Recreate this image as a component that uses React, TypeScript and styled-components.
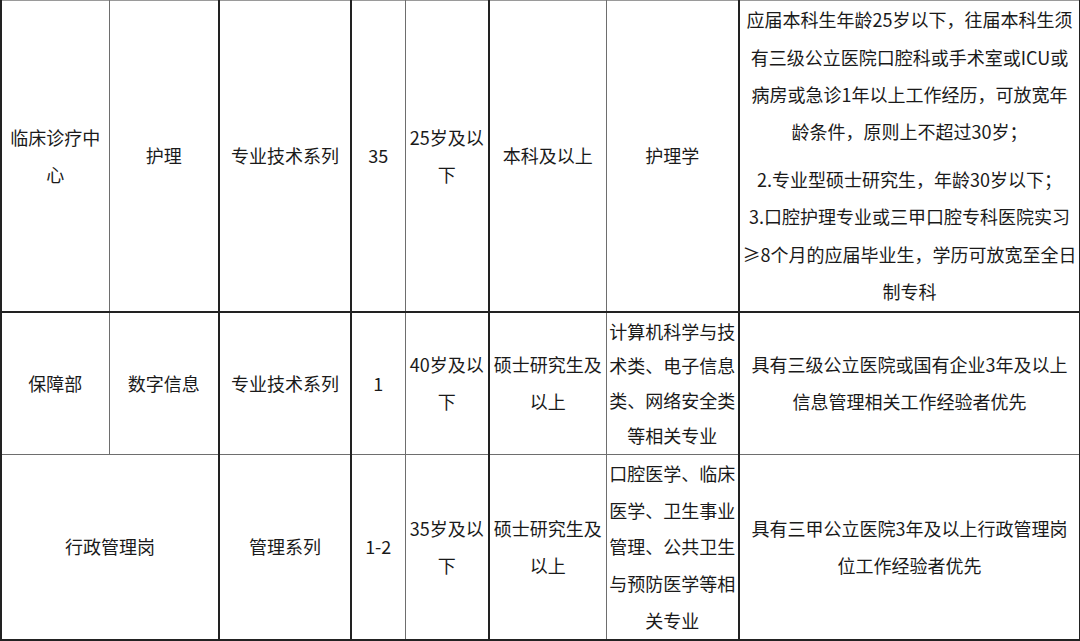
import React from 'react';
import styled, { createGlobalStyle } from 'styled-components';

const GlobalStyle = createGlobalStyle`
  html, body {
    margin: 0;
    padding: 0;
    background: #fff;
  }
  body {
    font-family: "Noto Sans CJK SC", "Noto Sans", sans-serif;
    color: #1a1a1a;
  }
`;

type Line = 'dark' | 'light';

const lineCss = (l?: Line) =>
  l === 'light' ? '1px solid #6e6e6e' : '2px solid #222';

const Table = styled.table`
  border-collapse: collapse;
  table-layout: fixed;
  width: 1079px;
  border-top: 1px solid #9a9a9a;
  border-left: 2px solid #222;
  font-size: 18px;
`;

const Row = styled.tr<{ $h: number; $b?: Line }>`
  height: ${(p) => p.$h}px;
  & > td {
    border-bottom: ${(p) => lineCss(p.$b)};
  }
`;

const Cell = styled.td<{ $r?: Line; $lh?: number }>`
  border-right: ${(p) => lineCss(p.$r)};
  padding: 0 2px;
  text-align: center;
  vertical-align: middle;
  line-height: ${(p) => p.$lh ?? 36.8}px;
  white-space: nowrap;
  overflow: hidden;
`;

const Para = styled.div<{ $gap?: number }>`
  margin-bottom: ${(p) => p.$gap ?? 0}px;
`;

const Lines = ({ items }: { items: string[] }) => (
  <>
    {items.map((t, i) => (
      <div key={i}>{t}</div>
    ))}
  </>
);

const widths = [108, 110, 132, 54, 84, 117, 133, 341];

export default function App() {
  return (
    <>
      <GlobalStyle />
      <Table>
        <colgroup>
          {widths.map((w, i) => (
            <col key={i} style={{ width: w }} />
          ))}
        </colgroup>
        <tbody>
          <Row $h={311} $b="dark">
            <Cell $r="light">
              <Lines items={['临床诊疗中', '心']} />
            </Cell>
            <Cell $r="dark">护理</Cell>
            <Cell $r="dark">专业技术系列</Cell>
            <Cell $r="light">35</Cell>
            <Cell $r="dark">
              <Lines items={['25岁及以', '下']} />
            </Cell>
            <Cell $r="light">本科及以上</Cell>
            <Cell $r="dark">护理学</Cell>
            <Cell $r="dark" $lh={37.4}>
              <Para $gap={10}>
                <Lines
                  items={[
                    '应届本科生年龄25岁以下，往届本科生须',
                    '有三级公立医院口腔科或手术室或ICU或',
                    '病房或急诊1年以上工作经历，可放宽年',
                    '龄条件，原则上不超过30岁；',
                  ]}
                />
              </Para>
              <Para>2.专业型硕士研究生，年龄30岁以下；</Para>
              <Para>
                <Lines
                  items={[
                    '3.口腔护理专业或三甲口腔专科医院实习',
                    '≥8个月的应届毕业生，学历可放宽至全日',
                    '制专科',
                  ]}
                />
              </Para>
            </Cell>
          </Row>
          <Row $h={143} $b="light">
            <Cell $r="light">保障部</Cell>
            <Cell $r="dark">数字信息</Cell>
            <Cell $r="dark">专业技术系列</Cell>
            <Cell $r="light">1</Cell>
            <Cell $r="dark">
              <Lines items={['40岁及以', '下']} />
            </Cell>
            <Cell $r="light">
              <Lines items={['硕士研究生及', '以上']} />
            </Cell>
            <Cell $r="dark" $lh={34.8}>
              <Lines items={['计算机科学与技', '术类、电子信息', '类、网络安全类', '等相关专业']} />
            </Cell>
            <Cell $r="dark">
              <Lines items={['具有三级公立医院或国有企业3年及以上', '信息管理相关工作经验者优先']} />
            </Cell>
          </Row>
          <Row $h={185} $b="dark">
            <Cell colSpan={2} $r="dark">
              行政管理岗
            </Cell>
            <Cell $r="dark">管理系列</Cell>
            <Cell $r="light">1-2</Cell>
            <Cell $r="dark">
              <Lines items={['35岁及以', '下']} />
            </Cell>
            <Cell $r="light">
              <Lines items={['硕士研究生及', '以上']} />
            </Cell>
            <Cell $r="dark" $lh={36.6}>
              <Lines
                items={['口腔医学、临床', '医学、卫生事业', '管理、公共卫生', '与预防医学等相', '关专业']}
              />
            </Cell>
            <Cell $r="dark">
              <Lines items={['具有三甲公立医院3年及以上行政管理岗', '位工作经验者优先']} />
            </Cell>
          </Row>
        </tbody>
      </Table>
    </>
  );
}
